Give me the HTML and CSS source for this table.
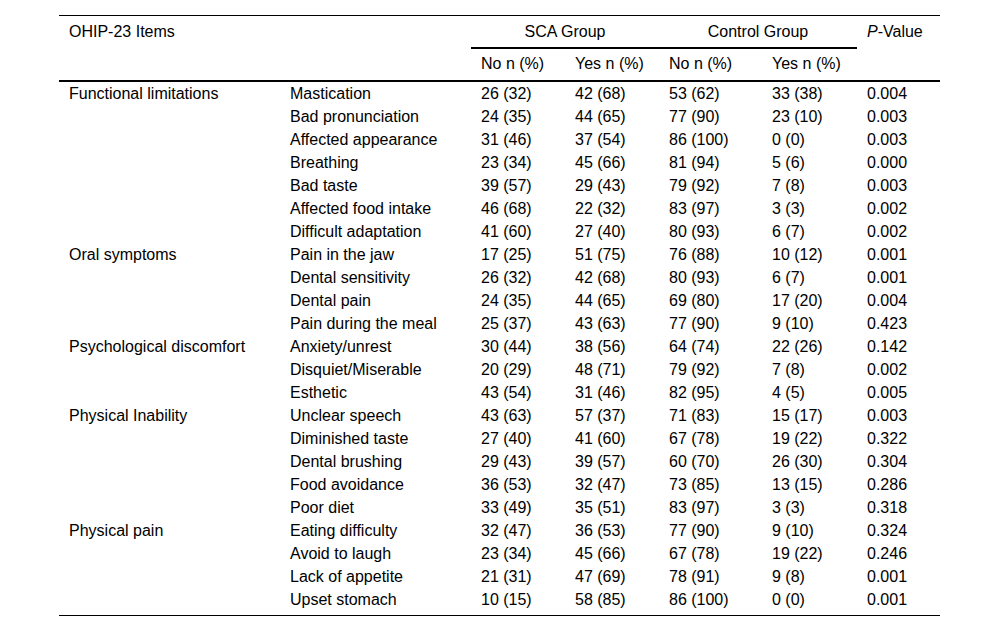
FILE: index.html
```html
<!DOCTYPE html>
<html lang="en">
<head>
<meta charset="utf-8">
<title>OHIP-23 Items</title>
<link rel="stylesheet" href="styles.css">
</head>
<body>
<table class="data">
  <colgroup>
    <col class="c1"><col class="c2"><col class="c3"><col class="c4"><col class="c5"><col class="c6"><col class="c7">
  </colgroup>
  <thead>
    <tr class="h1">
      <th colspan="2">OHIP-23 Items</th>
      <th colspan="2" class="grp">SCA Group</th>
      <th colspan="2" class="grp">Control Group</th>
      <th><i>P</i>-Value</th>
    </tr>
    <tr class="h2">
      <th colspan="2"></th>
      <th>No n (%)</th>
      <th>Yes n (%)</th>
      <th>No n (%)</th>
      <th>Yes n (%)</th>
      <th></th>
    </tr>
  </thead>
  <tbody>
    <tr><td>Functional limitations</td><td>Mastication</td><td>26 (32)</td><td>42 (68)</td><td>53 (62)</td><td>33 (38)</td><td>0.004</td></tr>
    <tr><td></td><td>Bad pronunciation</td><td>24 (35)</td><td>44 (65)</td><td>77 (90)</td><td>23 (10)</td><td>0.003</td></tr>
    <tr><td></td><td>Affected appearance</td><td>31 (46)</td><td>37 (54)</td><td>86 (100)</td><td>0 (0)</td><td>0.003</td></tr>
    <tr><td></td><td>Breathing</td><td>23 (34)</td><td>45 (66)</td><td>81 (94)</td><td>5 (6)</td><td>0.000</td></tr>
    <tr><td></td><td>Bad taste</td><td>39 (57)</td><td>29 (43)</td><td>79 (92)</td><td>7 (8)</td><td>0.003</td></tr>
    <tr><td></td><td>Affected food intake</td><td>46 (68)</td><td>22 (32)</td><td>83 (97)</td><td>3 (3)</td><td>0.002</td></tr>
    <tr><td></td><td>Difficult adaptation</td><td>41 (60)</td><td>27 (40)</td><td>80 (93)</td><td>6 (7)</td><td>0.002</td></tr>
    <tr><td>Oral symptoms</td><td>Pain in the jaw</td><td>17 (25)</td><td>51 (75)</td><td>76 (88)</td><td>10 (12)</td><td>0.001</td></tr>
    <tr><td></td><td>Dental sensitivity</td><td>26 (32)</td><td>42 (68)</td><td>80 (93)</td><td>6 (7)</td><td>0.001</td></tr>
    <tr><td></td><td>Dental pain</td><td>24 (35)</td><td>44 (65)</td><td>69 (80)</td><td>17 (20)</td><td>0.004</td></tr>
    <tr><td></td><td>Pain during the meal</td><td>25 (37)</td><td>43 (63)</td><td>77 (90)</td><td>9 (10)</td><td>0.423</td></tr>
    <tr><td>Psychological discomfort</td><td>Anxiety/unrest</td><td>30 (44)</td><td>38 (56)</td><td>64 (74)</td><td>22 (26)</td><td>0.142</td></tr>
    <tr><td></td><td>Disquiet/Miserable</td><td>20 (29)</td><td>48 (71)</td><td>79 (92)</td><td>7 (8)</td><td>0.002</td></tr>
    <tr><td></td><td>Esthetic</td><td>43 (54)</td><td>31 (46)</td><td>82 (95)</td><td>4 (5)</td><td>0.005</td></tr>
    <tr><td>Physical Inability</td><td>Unclear speech</td><td>43 (63)</td><td>57 (37)</td><td>71 (83)</td><td>15 (17)</td><td>0.003</td></tr>
    <tr><td></td><td>Diminished taste</td><td>27 (40)</td><td>41 (60)</td><td>67 (78)</td><td>19 (22)</td><td>0.322</td></tr>
    <tr><td></td><td>Dental brushing</td><td>29 (43)</td><td>39 (57)</td><td>60 (70)</td><td>26 (30)</td><td>0.304</td></tr>
    <tr><td></td><td>Food avoidance</td><td>36 (53)</td><td>32 (47)</td><td>73 (85)</td><td>13 (15)</td><td>0.286</td></tr>
    <tr><td></td><td>Poor diet</td><td>33 (49)</td><td>35 (51)</td><td>83 (97)</td><td>3 (3)</td><td>0.318</td></tr>
    <tr><td>Physical pain</td><td>Eating difficulty</td><td>32 (47)</td><td>36 (53)</td><td>77 (90)</td><td>9 (10)</td><td>0.324</td></tr>
    <tr><td></td><td>Avoid to laugh</td><td>23 (34)</td><td>45 (66)</td><td>67 (78)</td><td>19 (22)</td><td>0.246</td></tr>
    <tr><td></td><td>Lack of appetite</td><td>21 (31)</td><td>47 (69)</td><td>78 (91)</td><td>9 (8)</td><td>0.001</td></tr>
    <tr class="last"><td></td><td>Upset stomach</td><td>10 (15)</td><td>58 (85)</td><td>86 (100)</td><td>0 (0)</td><td>0.001</td></tr>
  </tbody>
</table>
</body>
</html>
```

FILE: styles.css
```css
html, body {
  margin: 0;
  padding: 0;
  background: #fff;
}

body {
  font-family: "Liberation Sans", Arial, sans-serif;
  font-size: 16px;
  color: #000;
}

.data {
  margin: 15px 0 0 59px;
  width: 881px;
  table-layout: fixed;
  border-collapse: separate;
  border-spacing: 0;
}

.c1 { width: 221px; }
.c2 { width: 191px; }
.c3 { width: 94px; }
.c4 { width: 94px; }
.c5 { width: 103px; }
.c6 { width: 95px; }
.c7 { width: 83px; }

.data th,
.data td {
  font-weight: normal;
  text-align: left;
  padding: 0 0 0 10px;
  line-height: 23px;
  vertical-align: top;
  white-space: nowrap;
}

.h1 th {
  border-top: 1px solid #000;
  padding-top: 4px;
  padding-bottom: 4px;
}

.h1 th.grp {
  text-align: center;
  padding-left: 0;
  border-bottom: 2px solid #000;
}

.h2 th {
  padding-top: 3px;
  padding-bottom: 5px;
  border-bottom: 2px solid #000;
}

.data tbody td {
  height: 23px;
}

.data tr.last td {
  padding-bottom: 4px;
  border-bottom: 1px solid #000;
}
```
